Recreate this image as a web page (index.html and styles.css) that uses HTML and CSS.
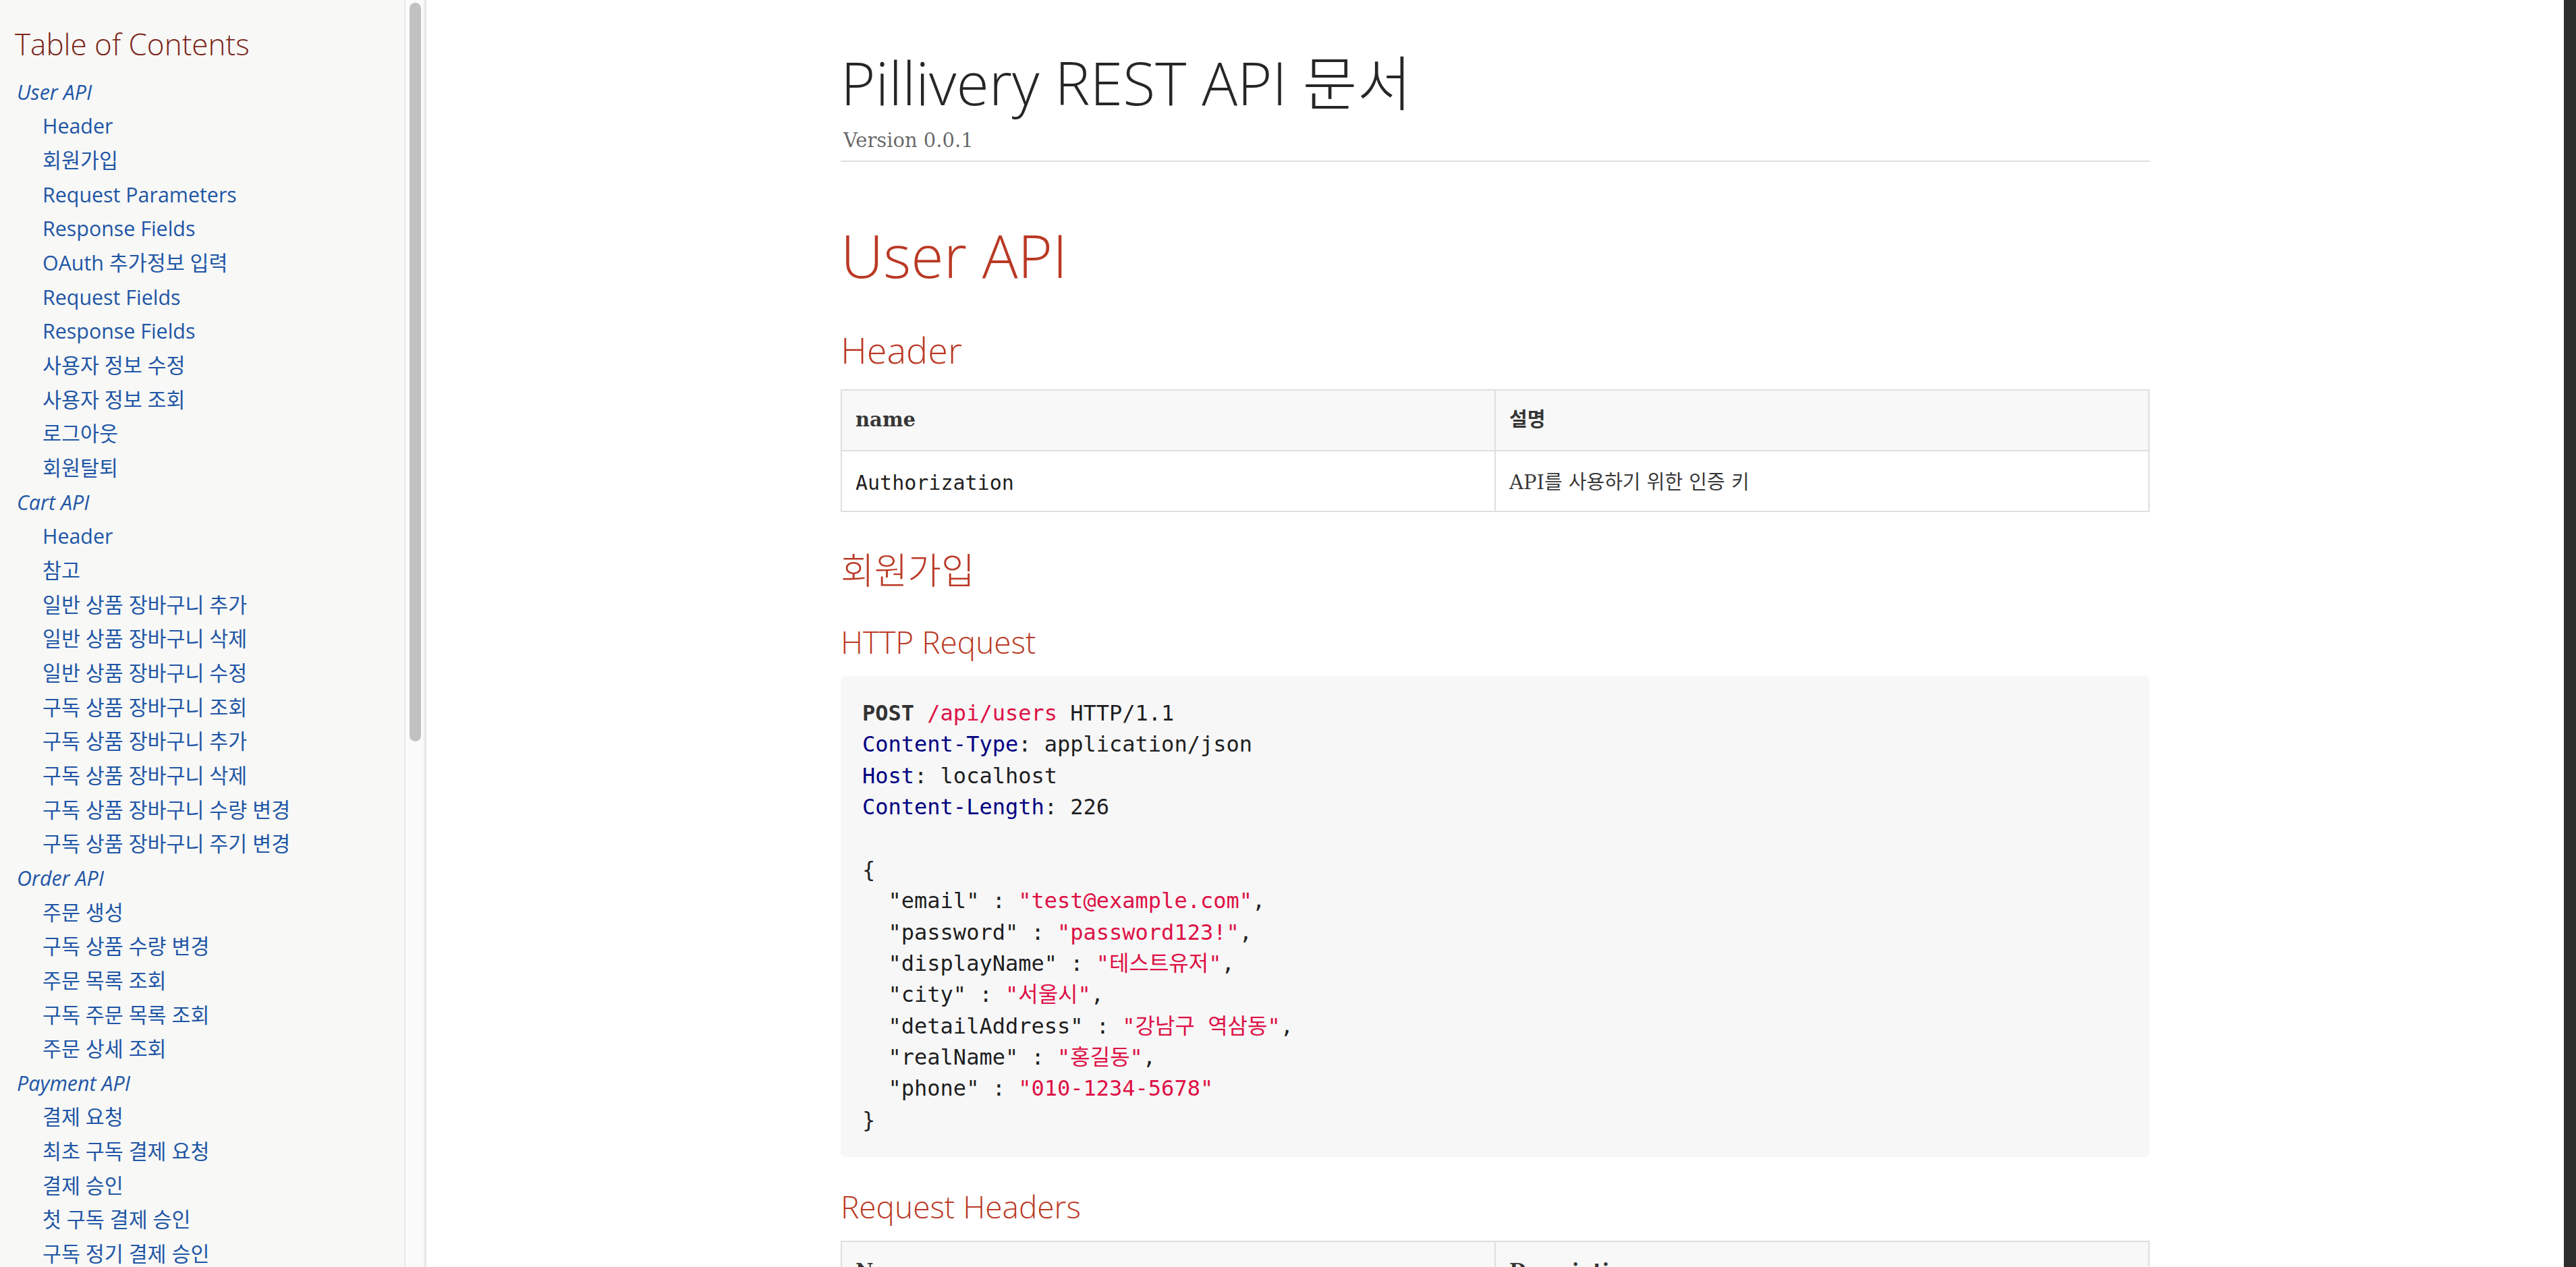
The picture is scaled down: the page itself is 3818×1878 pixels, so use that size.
FILE: index.html
```html
<!DOCTYPE html>
<html lang="ko">
<head>
<meta charset="utf-8">
<title>Pillivery REST API 문서</title>
<link rel="stylesheet" href="styles.css">
</head>
<body>
<div class="app">
  <nav class="toc">
    <div class="toc-body">
      <div class="toctitle">Table of Contents</div>
      <ul class="sectlevel0">
        <li><a href="#user-api">User API</a>
          <ul class="sectlevel1">
            <li><a href="#header">Header</a></li>
            <li><a href="#signup">회원가입</a></li>
            <li><a href="#">Request Parameters</a></li>
            <li><a href="#">Response Fields</a></li>
            <li><a href="#">OAuth 추가정보 입력</a></li>
            <li><a href="#">Request Fields</a></li>
            <li><a href="#">Response Fields</a></li>
            <li><a href="#">사용자 정보 수정</a></li>
            <li><a href="#">사용자 정보 조회</a></li>
            <li><a href="#">로그아웃</a></li>
            <li><a href="#">회원탈퇴</a></li>
          </ul>
        </li>
        <li><a href="#">Cart API</a>
          <ul class="sectlevel1">
            <li><a href="#">Header</a></li>
            <li><a href="#">참고</a></li>
            <li><a href="#">일반 상품 장바구니 추가</a></li>
            <li><a href="#">일반 상품 장바구니 삭제</a></li>
            <li><a href="#">일반 상품 장바구니 수정</a></li>
            <li><a href="#">구독 상품 장바구니 조회</a></li>
            <li><a href="#">구독 상품 장바구니 추가</a></li>
            <li><a href="#">구독 상품 장바구니 삭제</a></li>
            <li><a href="#">구독 상품 장바구니 수량 변경</a></li>
            <li><a href="#">구독 상품 장바구니 주기 변경</a></li>
          </ul>
        </li>
        <li><a href="#">Order API</a>
          <ul class="sectlevel1">
            <li><a href="#">주문 생성</a></li>
            <li><a href="#">구독 상품 수량 변경</a></li>
            <li><a href="#">주문 목록 조회</a></li>
            <li><a href="#">구독 주문 목록 조회</a></li>
            <li><a href="#">주문 상세 조회</a></li>
          </ul>
        </li>
        <li><a href="#">Payment API</a>
          <ul class="sectlevel1">
            <li><a href="#">결제 요청</a></li>
            <li><a href="#">최초 구독 결제 요청</a></li>
            <li><a href="#">결제 승인</a></li>
            <li><a href="#">첫 구독 결제 승인</a></li>
            <li><a href="#">구독 정기 결제 승인</a></li>
          </ul>
        </li>
      </ul>
    </div>
    <div class="scrolltrack"><div class="scrollthumb"></div></div>
  </nav>

  <main class="main">
    <div class="page">
      <header class="doc-header">
        <h1 class="doc-title">Pillivery REST API 문서</h1>
        <div class="details"><span class="revnumber">Version 0.0.1</span></div>
      </header>

      <section class="content">
        <h1 class="part" id="user-api">User API</h1>

        <h3 class="sect" id="header">Header</h3>
        <table class="tbl">
          <colgroup><col class="half"><col class="half"></colgroup>
          <thead>
            <tr><th>name</th><th>설명</th></tr>
          </thead>
          <tbody>
            <tr><td><code>Authorization</code></td><td>API를 사용하기 위한 인증 키</td></tr>
          </tbody>
        </table>

        <h3 class="sect" id="signup">회원가입</h3>
        <h4 class="sub">HTTP Request</h4>
<pre class="listing"><code><span class="kw">POST</span> <span class="str">/api/users</span> HTTP/1.1
<span class="attr">Content-Type</span>: application/json
<span class="attr">Host</span>: localhost
<span class="attr">Content-Length</span>: 226

{
  "email" : <span class="str">"test@example.com"</span>,
  "password" : <span class="str">"password123!"</span>,
  "displayName" : <span class="str">"테스트유저"</span>,
  "city" : <span class="str">"서울시"</span>,
  "detailAddress" : <span class="str">"강남구 역삼동"</span>,
  "realName" : <span class="str">"홍길동"</span>,
  "phone" : <span class="str">"010-1234-5678"</span>
}</code></pre>

        <h4 class="sub">Request Headers</h4>
        <table class="tbl">
          <colgroup><col class="half"><col class="half"></colgroup>
          <thead>
            <tr><th>Name</th><th>Description</th></tr>
          </thead>
          <tbody>
            <tr><td><code>Content-Type</code></td><td>요청 본문 형식</td></tr>
          </tbody>
        </table>
      </section>
    </div>
  </main>

  <div class="edge"></div>
</div>
</body>
</html>
```

FILE: styles.css
```css
* { box-sizing: border-box; }

html, body {
  margin: 0;
  padding: 0;
}

body {
  background: #fff;
  color: rgba(0, 0, 0, .8);
  font-family: "DejaVu Serif", "Noto Sans CJK KR", serif;
  height: 1878px;
  overflow: hidden;
}

.app {
  display: flex;
  height: 1878px;
}

/* ---------- sidebar TOC ---------- */
.toc {
  flex: 0 0 632px;
  display: flex;
  height: 100%;
  background: #f8f8f7;
  border-right: 2px solid #e7e7e9;
  overflow: hidden;
}

.toc-body {
  flex: 1;
  min-width: 0;
  padding: 39px 0 0 22px;
  overflow: hidden;
}

.toctitle {
  font-family: "Open Sans", "Noto Sans CJK KR", sans-serif;
  font-weight: 300;
  font-size: 44px;
  line-height: 1.2;
  color: #7a2518;
  margin: 0 0 25px;
}

.toc ul {
  list-style: none;
  margin: 0;
  padding: 0;
  font-family: "Open Sans", "Noto Sans CJK KR", sans-serif;
}

.toc .sectlevel0 {
  margin-left: 3px;
  font-size: 30.4px;
}

.toc li {
  line-height: 1.3334;
  margin-top: .3334em;
  white-space: nowrap;
}

.toc .sectlevel1 {
  padding-left: 38px;
}

.toc a {
  color: #2156a5;
  text-decoration: none;
}

.toc .sectlevel0 > li > a {
  font-style: italic;
}

.scrolltrack {
  flex: 0 0 31px;
  background: #fafafa;
  border-left: 2px solid #e8e8e8;
  border-right: 2px solid #ececec;
  padding: 4px 4px 0 6px;
}

.scrollthumb {
  width: 17px;
  height: 1095px;
  background: #c1c1c1;
  border-radius: 9px;
}

/* ---------- main column ---------- */
.main {
  flex: 1;
  min-width: 0;
  height: 100%;
  overflow: hidden;
}

.edge {
  flex: 0 0 18px;
  background: #2d2d2d;
}

.page {
  max-width: 2000px;
  margin: 0 auto;
  padding: 0 30px;
}

.doc-title,
.part,
.sect,
.sub {
  font-family: "Open Sans", "Noto Sans CJK KR", sans-serif;
  font-weight: 300;
  line-height: 1.2;
  color: #ba3925;
}

.doc-title {
  font-size: 88px;
  color: rgba(0, 0, 0, .85);
  margin: 70px 0 0;
}

.details {
  display: flex;
  padding: 9px 0 7px 8px;
  line-height: 46.4px;
  font-size: 29px;
  color: rgba(0, 0, 0, .6);
  border-bottom: 2px solid #dddddf;
}

.revnumber {
  margin-left: -4px;
}

.part {
  font-size: 88px;
  margin: 86px 0 0;
}

.sect {
  font-size: 54px;
  margin: 54px 0 27px;
}

.sub {
  font-size: 46px;
  margin: 46px 0 23px;
}

/* ---------- tables ---------- */
.tbl {
  width: 100%;
  border-collapse: collapse;
  table-layout: fixed;
  margin: 0 0 40px;
  background: #fff;
}

.tbl .half { width: 50%; }

.tbl th,
.tbl td {
  border: 2px solid #dedede;
  text-align: left;
  vertical-align: top;
  color: rgba(0, 0, 0, .8);
  font-size: 29px;
  line-height: 51.2px;
}

.tbl th {
  background: #f7f8f7;
  padding: 18px 20px 18px;
  font-weight: bold;
}

.tbl td {
  padding: 21px 20px 15px;
}

.tbl code {
  font-family: "DejaVu Sans Mono", "Noto Sans CJK KR", monospace;
  font-size: 30px;
  color: rgba(0, 0, 0, .9);
}

/* ---------- listing ---------- */
.listing {
  margin: 0 0 40px;
  padding: 32px;
  background: #f7f7f8;
  border-radius: 8px;
  font-family: "DejaVu Sans Mono", "Noto Sans CJK KR", monospace;
  font-size: 32px;
  line-height: 1.45;
  color: rgba(0, 0, 0, .9);
  white-space: pre;
  overflow: hidden;
}

.listing code {
  font-family: inherit;
}

.kw {
  color: #333;
  font-weight: bold;
}

.str {
  color: #d14;
}

.attr {
  color: #000080;
}
```
